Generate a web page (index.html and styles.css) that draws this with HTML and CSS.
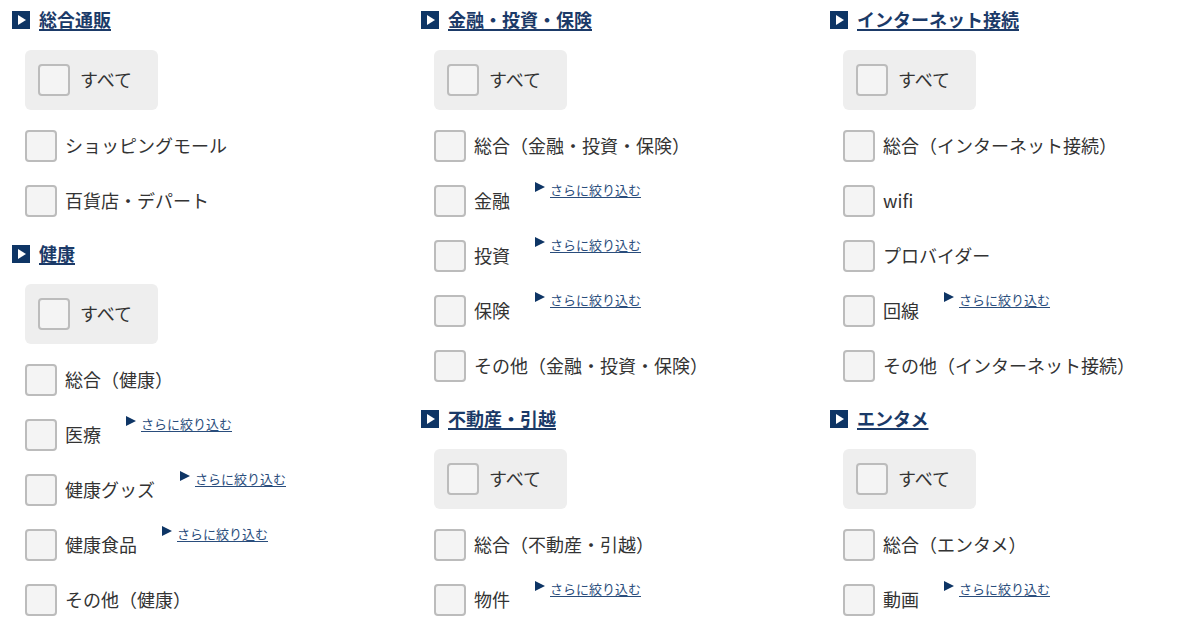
FILE: index.html
```html
<!DOCTYPE html>
<html lang="ja">
<head>
<meta charset="utf-8">
<link rel="stylesheet" href="styles.css">
</head>
<body>
<div class="page">
  <div class="col">
    <section class="sec">
      <h2 class="head"><span class="head-icon"></span><a href="#">総合通販</a></h2>
      <label class="all"><span class="cb"></span><span class="lbl">すべて</span></label>
      <ul class="rows">
        <li class="row"><span class="cb"></span><span class="lbl">ショッピングモール</span></li>
        <li class="row"><span class="cb"></span><span class="lbl">百貨店・デパート</span></li>
      </ul>
    </section>
    <section class="sec">
      <h2 class="head"><span class="head-icon"></span><a href="#">健康</a></h2>
      <label class="all"><span class="cb"></span><span class="lbl">すべて</span></label>
      <ul class="rows">
        <li class="row"><span class="cb"></span><span class="lbl">総合（健康）</span></li>
        <li class="row"><span class="cb"></span><span class="lbl">医療</span><a class="more" href="#"><span class="tri"></span><span class="more-t">さらに絞り込む</span></a></li>
        <li class="row"><span class="cb"></span><span class="lbl">健康グッズ</span><a class="more" href="#"><span class="tri"></span><span class="more-t">さらに絞り込む</span></a></li>
        <li class="row"><span class="cb"></span><span class="lbl">健康食品</span><a class="more" href="#"><span class="tri"></span><span class="more-t">さらに絞り込む</span></a></li>
        <li class="row"><span class="cb"></span><span class="lbl">その他（健康）</span></li>
      </ul>
    </section>
  </div>
  <div class="col">
    <section class="sec">
      <h2 class="head"><span class="head-icon"></span><a href="#">金融・投資・保険</a></h2>
      <label class="all"><span class="cb"></span><span class="lbl">すべて</span></label>
      <ul class="rows">
        <li class="row"><span class="cb"></span><span class="lbl">総合（金融・投資・保険）</span></li>
        <li class="row"><span class="cb"></span><span class="lbl">金融</span><a class="more" href="#"><span class="tri"></span><span class="more-t">さらに絞り込む</span></a></li>
        <li class="row"><span class="cb"></span><span class="lbl">投資</span><a class="more" href="#"><span class="tri"></span><span class="more-t">さらに絞り込む</span></a></li>
        <li class="row"><span class="cb"></span><span class="lbl">保険</span><a class="more" href="#"><span class="tri"></span><span class="more-t">さらに絞り込む</span></a></li>
        <li class="row"><span class="cb"></span><span class="lbl">その他（金融・投資・保険）</span></li>
      </ul>
    </section>
    <section class="sec">
      <h2 class="head"><span class="head-icon"></span><a href="#">不動産・引越</a></h2>
      <label class="all"><span class="cb"></span><span class="lbl">すべて</span></label>
      <ul class="rows">
        <li class="row"><span class="cb"></span><span class="lbl">総合（不動産・引越）</span></li>
        <li class="row"><span class="cb"></span><span class="lbl">物件</span><a class="more" href="#"><span class="tri"></span><span class="more-t">さらに絞り込む</span></a></li>
      </ul>
    </section>
  </div>
  <div class="col">
    <section class="sec">
      <h2 class="head"><span class="head-icon"></span><a href="#">インターネット接続</a></h2>
      <label class="all"><span class="cb"></span><span class="lbl">すべて</span></label>
      <ul class="rows">
        <li class="row"><span class="cb"></span><span class="lbl">総合（インターネット接続）</span></li>
        <li class="row"><span class="cb"></span><span class="lbl">wifi</span></li>
        <li class="row"><span class="cb"></span><span class="lbl">プロバイダー</span></li>
        <li class="row"><span class="cb"></span><span class="lbl">回線</span><a class="more" href="#"><span class="tri"></span><span class="more-t">さらに絞り込む</span></a></li>
        <li class="row"><span class="cb"></span><span class="lbl">その他（インターネット接続）</span></li>
      </ul>
    </section>
    <section class="sec">
      <h2 class="head"><span class="head-icon"></span><a href="#">エンタメ</a></h2>
      <label class="all"><span class="cb"></span><span class="lbl">すべて</span></label>
      <ul class="rows">
        <li class="row"><span class="cb"></span><span class="lbl">総合（エンタメ）</span></li>
        <li class="row"><span class="cb"></span><span class="lbl">動画</span><a class="more" href="#"><span class="tri"></span><span class="more-t">さらに絞り込む</span></a></li>
      </ul>
    </section>
  </div>
</div>
</body>
</html>
```

FILE: styles.css
```css
* { box-sizing: border-box; }
html, body { margin: 0; padding: 0; background: #fff; }
body {
  font-family: "Noto Sans CJK JP", "Noto Sans", sans-serif;
  color: #333;
  overflow: hidden;
}
.page {
  display: grid;
  grid-template-columns: 409px 409px 356px;
  padding: 10px 0 0 12px;
}
.col {
  display: flex;
  flex-direction: column;
  gap: 27px;
}
.sec {
  display: flex;
  flex-direction: column;
}
.head {
  display: flex;
  align-items: center;
  gap: 9px;
  margin: 0 0 20px;
  height: 20px;
  font-size: 18px;
  font-weight: 700;
  line-height: 20px;
}
.head a {
  color: #1b3a68;
  text-decoration: underline;
  text-underline-offset: 2px;
  text-decoration-thickness: 2px;
  padding-bottom: 3px;
}
.head-icon {
  width: 18px;
  height: 18px;
  background: #0e3565;
  position: relative;
  flex: none;
}
.head-icon::after {
  content: "";
  position: absolute;
  left: 6px;
  top: 4px;
  border-left: 8px solid #fff;
  border-top: 5px solid transparent;
  border-bottom: 5px solid transparent;
}
.all {
  display: flex;
  align-items: center;
  gap: 10px;
  width: 133px;
  height: 60px;
  margin: 0 0 20px 13px;
  padding-left: 13px;
  background: #eeeeee;
  border-radius: 6px;
  font-size: 18px;
}
.cb {
  width: 32px;
  height: 32px;
  flex: none;
  border: 2px solid #bcbcbc;
  border-radius: 4px;
  background: #f4f4f4;
}
.rows {
  list-style: none;
  margin: 0;
  padding: 0 0 0 13px;
  display: flex;
  flex-direction: column;
  gap: 23px;
}
.row {
  display: flex;
  align-items: center;
  height: 32px;
  font-size: 18px;
}
.lbl {
  margin-left: 8px;
  line-height: 24px;
  padding-bottom: 3px;
  white-space: nowrap;
}
.all .lbl { margin-left: 0; }
.more {
  align-self: flex-start;
  margin: -3px 0 0 25px;
  display: flex;
  align-items: flex-start;
  gap: 5px;
  font-size: 13px;
  line-height: 16px;
  color: #2a4d7c;
  text-decoration: none;
  white-space: nowrap;
}
.tri {
  width: 0;
  height: 0;
  margin-top: 0;
  border-left: 10px solid #0e3565;
  border-top: 5px solid transparent;
  border-bottom: 5px solid transparent;
}
.more-t {
  text-decoration: underline;
  text-underline-offset: 2px;
}
```
